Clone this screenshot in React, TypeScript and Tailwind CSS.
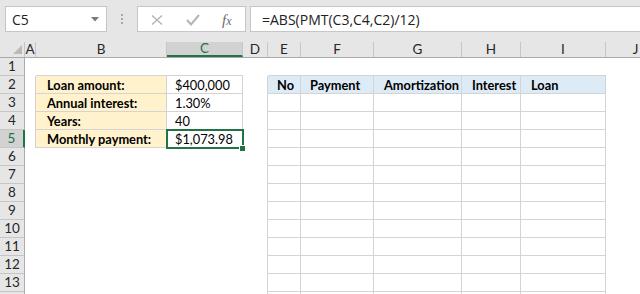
import React from "react";

const cols = [
  { k: "A", w: 11 },
  { k: "B", w: 131 },
  { k: "C", w: 76 },
  { k: "D", w: 25 },
  { k: "E", w: 33 },
  { k: "F", w: 73 },
  { k: "G", w: 88 },
  { k: "H", w: 59 },
  { k: "I", w: 85 },
  { k: "J", w: 60 },
];

const rows = Array.from({ length: 14 }, (_, i) => i + 1);

const leftTable: Record<number, [string, string]> = {
  2: ["Loan amount:", "$400,000"],
  3: ["Annual interest:", "1.30%"],
  4: ["Years:", "40"],
  5: ["Monthly payment:", "$1,073.98"],
};

const rightHead: Record<string, string> = {
  E: "No",
  F: "Payment",
  G: "Amortization",
  H: "Interest",
  I: "Loan",
};

function inTable(r: number, ci: number): boolean {
  if (ci < 0 || ci >= cols.length) return false;
  const k = cols[ci].k;
  if (r >= 2 && r <= 5 && (k === "B" || k === "C")) return true;
  if (r >= 2 && ["E", "F", "G", "H", "I"].includes(k)) return true;
  return false;
}

const cellFont = { fontFamily: "Lato, 'Liberation Sans', sans-serif" };

export default function App() {
  return (
    <div className="w-[640px] h-[294px] overflow-hidden bg-white select-none">
      {/* formula bar area */}
      <div
        className="h-[42px] bg-[#e6e6e6] flex items-start pt-[6px] relative"
        style={{ fontFamily: "'Open Sans', 'Noto Sans', sans-serif" }}
      >
        <div className="ml-[5px] w-[102px] h-[26px] bg-white border border-[#c6c6c6] flex items-center pl-[6px] text-[14px] text-[#222] relative">
          C5
          <svg className="absolute right-[7px] top-[10px]" width="8" height="5" viewBox="0 0 8 5">
            <path d="M0 0 H8 L4 4.5 Z" fill="#7a7a7a" />
          </svg>
        </div>
        <div className="w-[30px] h-[26px] flex flex-col items-center justify-center gap-[2px]">
          <div className="w-[2px] h-[2px] bg-[#a8a8a8]" />
          <div className="w-[2px] h-[2px] bg-[#a8a8a8]" />
          <div className="w-[2px] h-[2px] bg-[#a8a8a8]" />
        </div>
        <div className="w-[109px] h-[26px] bg-white border border-[#c6c6c6] flex items-center relative">
          <svg className="absolute left-[13px] top-[8px]" width="12" height="10" viewBox="0 0 12 10">
            <path d="M1 0.5 L11 9.5 M11 0.5 L1 9.5" stroke="#b4b4b4" strokeWidth="1.4" fill="none" />
          </svg>
          <svg className="absolute left-[48px] top-[7px]" width="14" height="12" viewBox="0 0 14 12">
            <path d="M1 6 L5 10.5 L13 1" stroke="#b4b4b4" strokeWidth="2" fill="none" />
          </svg>
          <span
            className="absolute left-[84px] top-[2px] text-[15px] italic text-[#6a6a6a]"
            style={{ fontFamily: "'Liberation Serif', 'DejaVu Serif', serif" }}
          >
            f<span className="text-[12px]">x</span>
          </span>
        </div>
        <div className="ml-[4px] flex-1 h-[26px] bg-white border border-[#c6c6c6] border-r-0 flex items-center pl-[11px] text-[14px] text-[#222]">
          =ABS(PMT(C3,C4,C2)/12)
        </div>
      </div>

      {/* column header row */}
      <div className="flex h-[16px] bg-[#e6e6e6] border-b border-[#ababab]" style={cellFont}>
        <div className="w-[25px] shrink-0 h-full relative border-r border-[#c6c6c6]">
          <svg className="absolute left-[13px] top-[3px]" width="9" height="9" viewBox="0 0 9 9">
            <path d="M9 0 V9 H0 Z" fill="#b9b9b9" />
          </svg>
        </div>
        {cols.map((c) => {
          const sel = c.k === "C";
          return (
            <div
              key={c.k}
              style={{ width: c.w }}
              className={
                "shrink-0 h-full flex items-center justify-center text-[13.5px] leading-none border-r border-[#c6c6c6] " +
                (sel ? "bg-[#d2d2d2] text-[#217346] border-b-2 border-b-[#217346]" : "text-[#262626]")
              }
            >
              {c.k}
            </div>
          );
        })}
      </div>

      {/* rows */}
      {rows.map((r) => {
        const selRow = r === 5;
        return (
          <div key={r} className="flex h-[18px]" style={cellFont}>
            <div
              className={
                "w-[25px] shrink-0 h-full flex items-center justify-center text-[13.5px] leading-none border-b border-[#c6c6c6] " +
                (selRow
                  ? "bg-[#d2d2d2] text-[#217346] border-r-2 border-r-[#217346]"
                  : "bg-[#e6e6e6] text-[#262626] border-r border-r-[#ababab]")
              }
            >
              {r <= 13 ? r : null}
            </div>
            {cols.map((c, ci) => {
              const t = inTable(r, ci);
              const hasR = t || inTable(r, ci + 1);
              const hasB = t || inTable(r + 1, ci);
              let bg = "";
              let content: React.ReactNode = null;
              let bold = false;
              let pl = "pl-[10px]";
              if (leftTable[r] && c.k === "B") {
                bg = "bg-[#fff2cc]";
                content = leftTable[r][0];
                bold = true;
                pl = "pl-[11px]";
              } else if (leftTable[r] && c.k === "C") {
                content = leftTable[r][1];
                pl = "pl-[8px]";
              } else if (r === 2 && rightHead[c.k]) {
                bg = "bg-[#ddebf7]";
                content = rightHead[c.k];
                bold = true;
                pl = c.k === "E" || c.k === "F" ? "pl-[9px]" : "pl-[10px]";
              }
              const sel = r === 5 && c.k === "C";
              return (
                <div
                  key={c.k}
                  style={{ width: c.w }}
                  className={
                    "shrink-0 h-full relative flex items-center whitespace-nowrap text-[12.8px] leading-none text-black " +
                    pl +
                    " " +
                    bg +
                    (bold ? " font-bold" : "") +
                    (hasR ? " border-r border-r-[#d4d4d4]" : "") +
                    (hasB ? " border-b border-b-[#d4d4d4]" : "")
                  }
                >
                  <span className="pt-[2px]">{content}</span>
                  {sel && (
                    <>
                      <div className="absolute -left-[1px] -top-[1px] w-[78px] h-[20px] border-2 border-[#217346] pointer-events-none" />
                      <div className="absolute left-[72px] top-[15px] w-[7px] h-[7px] bg-[#217346] border border-white z-10" />
                    </>
                  )}
                </div>
              );
            })}
          </div>
        );
      })}
    </div>
  );
}
